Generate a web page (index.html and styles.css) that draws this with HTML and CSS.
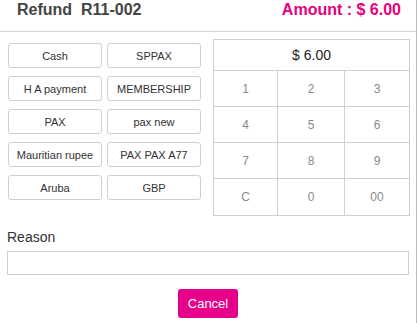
FILE: index.html
```html
<!DOCTYPE html>
<html lang="en">

<head>
    <meta charset="UTF-8">
    <meta name="viewport" content="width=device-width, initial-scale=1.0">
    <title>Refund</title>
    <link rel="stylesheet" href="styles.css">
</head>

<body>
    <div class="modal">
        <div class="header">
            <h2 class="title">Refund&nbsp; R11-002</h2>
            <h2 class="amount">Amount : $ 6.00</h2>
        </div>
        <div class="content">
            <div class="payments">
                <button class="pay">Cash</button>
                <button class="pay">SPPAX</button>
                <button class="pay">H A payment</button>
                <button class="pay">MEMBERSHIP</button>
                <button class="pay">PAX</button>
                <button class="pay">pax new</button>
                <button class="pay">Mauritian rupee</button>
                <button class="pay">PAX PAX A77</button>
                <button class="pay">Aruba</button>
                <button class="pay">GBP</button>
            </div>
            <div class="keypad">
                <div class="display">$ 6.00</div>
                <div class="keys">
                    <div class="key">1</div>
                    <div class="key">2</div>
                    <div class="key">3</div>
                    <div class="key">4</div>
                    <div class="key">5</div>
                    <div class="key">6</div>
                    <div class="key">7</div>
                    <div class="key">8</div>
                    <div class="key">9</div>
                    <div class="key">C</div>
                    <div class="key">0</div>
                    <div class="key">00</div>
                </div>
            </div>
        </div>
        <div class="reason">
            <label for="reason">Reason</label>
            <input type="text" id="reason">
        </div>
        <div class="footer">
            <button class="cancel">Cancel</button>
        </div>
    </div>
</body>

</html>
```

FILE: styles.css
```css
body {
    font-family: "Liberation Sans", Arial, sans-serif;
    margin: 0;
    background-color: #fff;
}

.modal {
    width: 416px;
    height: 323px;
    border-right: 1px solid #bdbdbd;
}

.header {
    display: flex;
    justify-content: space-between;
    align-items: center;
    height: 32px;
    padding: 0 15px 0 17px;
    border-bottom: 1px solid #d4d4d4;
    box-sizing: border-box;
}

.header h2 {
    margin: 0;
    margin-top: -11px;
    font-size: 16px;
    line-height: 22px;
}

.title {
    color: #444;
}

.amount {
    color: #e6007e;
}

.content {
    display: flex;
    justify-content: space-between;
    padding: 7px 6px 0 8px;
}

.payments {
    display: grid;
    grid-template-columns: 94px 94px;
    grid-auto-rows: 25px;
    column-gap: 5px;
    row-gap: 8px;
    padding-top: 4px;
}

.pay {
    font-family: inherit;
    font-size: 11px;
    color: #333;
    background-color: #fff;
    border: 1px solid #cfcfcf;
    border-radius: 3px;
    padding: 0;
}

.keypad {
    width: 195px;
    border: 1px solid #d0d0d0;
}

.display {
    height: 30px;
    line-height: 30px;
    text-align: center;
    font-size: 14px;
    color: #222;
    border-bottom: 1px solid #d0d0d0;
}

.keys {
    display: grid;
    grid-template-columns: 64px 67px 64px;
    grid-auto-rows: 36px;
}

.key {
    display: flex;
    align-items: center;
    justify-content: center;
    font-size: 12px;
    color: #8a8a8a;
    border-right: 1px solid #d0d0d0;
    border-bottom: 1px solid #d0d0d0;
}

.key:nth-child(3n) {
    border-right: none;
}

.key:nth-last-child(-n+3) {
    border-bottom: none;
}

.reason {
    padding: 13px 7px 0 7px;
}

.reason label {
    display: block;
    font-size: 14px;
    color: #333;
    margin-bottom: 6px;
}

.reason input {
    display: block;
    width: 100%;
    height: 24px;
    box-sizing: border-box;
    border: 1px solid #cfcfcf;
    border-radius: 0;
}

.footer {
    display: flex;
    justify-content: center;
    padding-top: 14px;
}

.cancel {
    font-family: inherit;
    width: 60px;
    height: 29px;
    font-size: 13px;
    color: #fff;
    background-color: #e6008a;
    border: none;
    border-radius: 3px;
    cursor: pointer;
}
```
